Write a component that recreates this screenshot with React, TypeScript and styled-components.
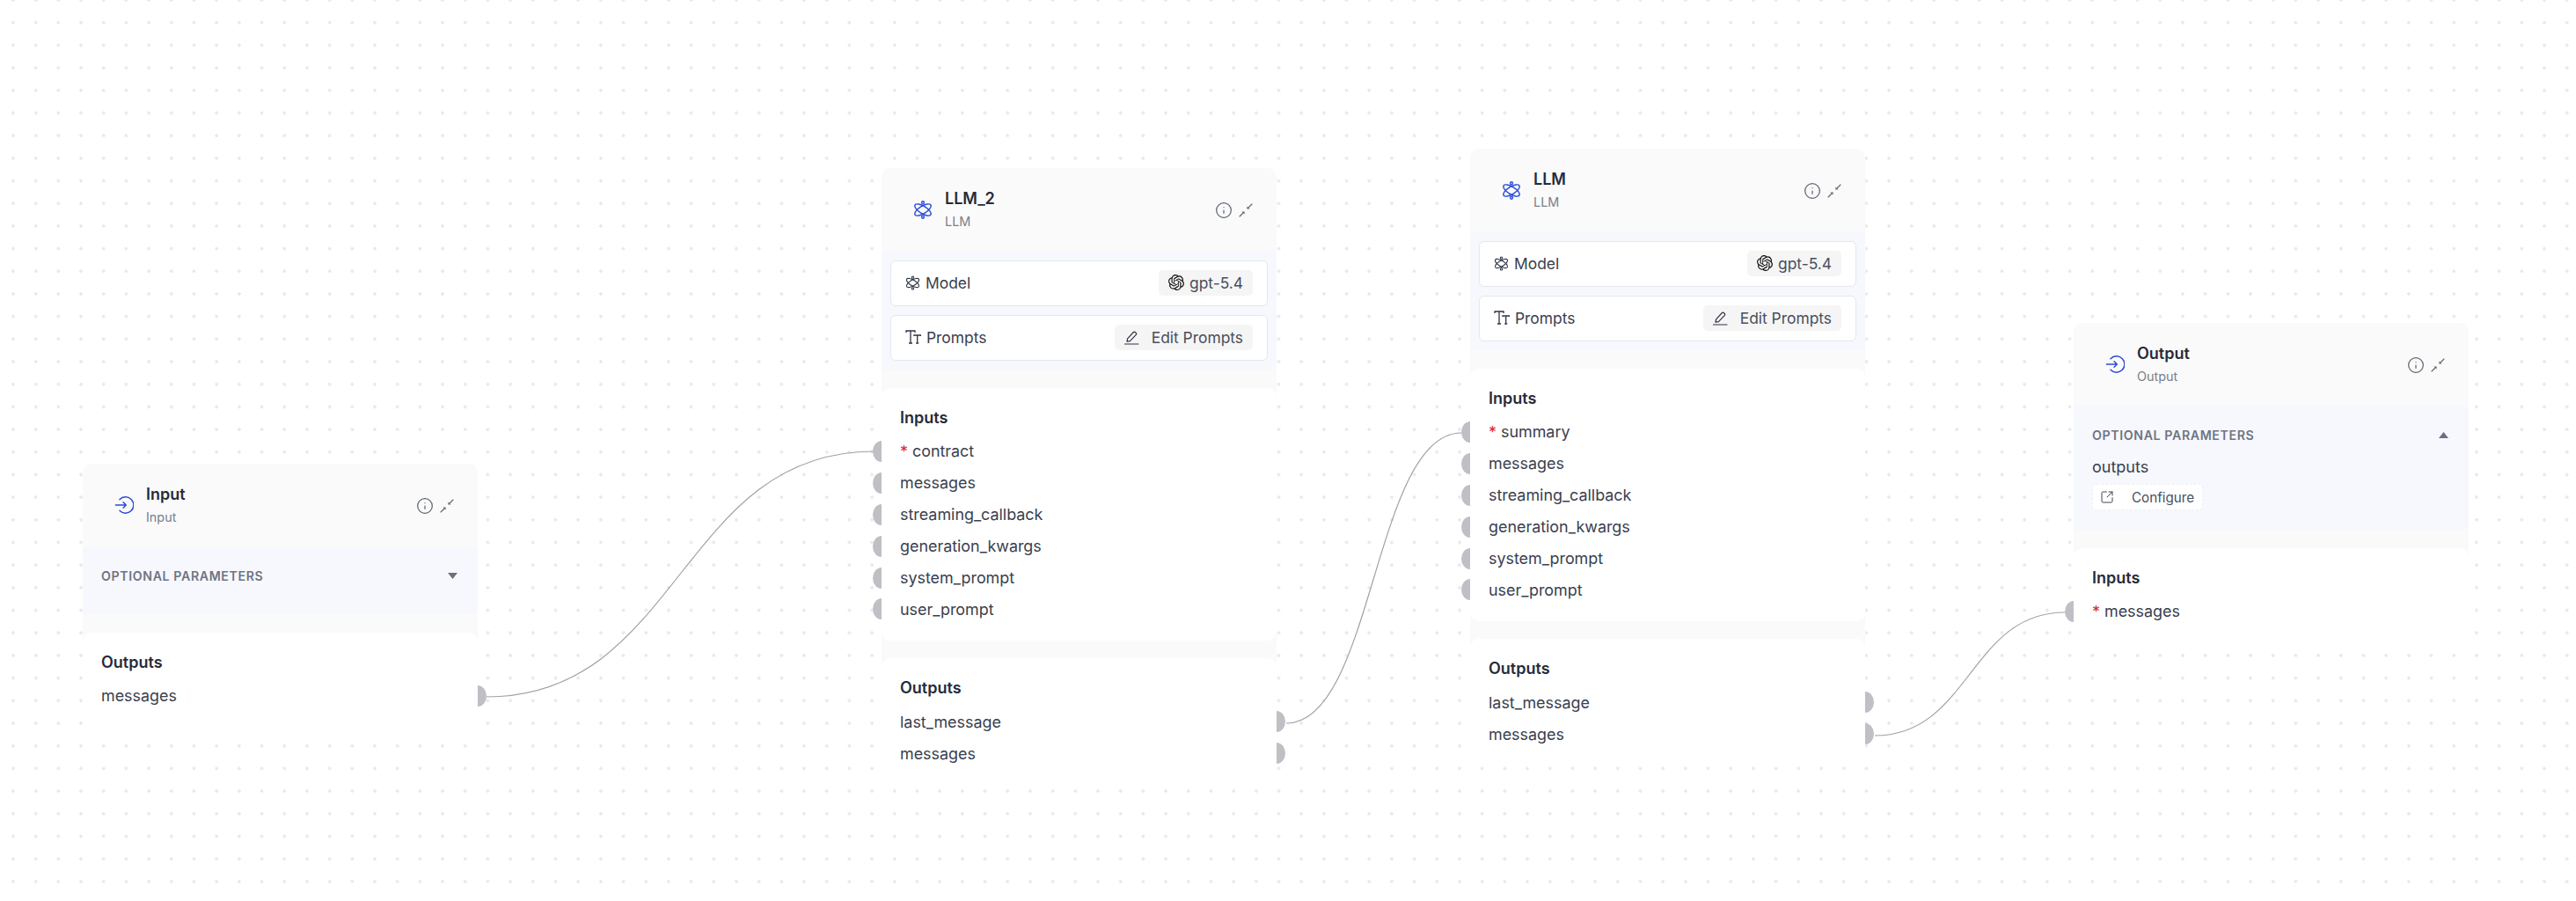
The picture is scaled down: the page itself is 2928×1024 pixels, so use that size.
import React from 'react';
import styled, { createGlobalStyle } from 'styled-components';
import { Info, SquareArrowOutUpRight } from 'lucide-react';
import { SiOpenai } from 'react-icons/si';

const GlobalStyle = createGlobalStyle`
  html, body {
    margin: 0;
    padding: 0;
    background: #fff;
    font-family: Inter, "Liberation Sans", sans-serif;
  }
`;

const Canvas = styled.div`
  position: relative;
  width: 2928px;
  height: 1024px;
  overflow: hidden;
  background-color: #fff;
  background-image: radial-gradient(circle, #e9e9eb 1.5px, transparent 2.1px);
  background-size: 25.7px 25.7px;
  background-position: 2.15px -12.85px;
`;

const Edges = styled.svg`
  position: absolute;
  inset: 0;
  width: 2928px;
  height: 1024px;
  pointer-events: none;
`;

const NodeBox = styled.div<{ $x: number; $y: number }>`
  position: absolute;
  left: ${(p) => p.$x}px;
  top: ${(p) => p.$y}px;
  width: 449px;
  background: #fafafa;
  border-radius: 10px;
`;

const Header = styled.div`
  height: 95px;
  box-sizing: border-box;
  padding: 22px 27px 0 36px;
  display: flex;
  align-items: flex-start;
`;

const HeaderIcon = styled.div`
  width: 22px;
  height: 50px;
  margin-right: 14px;
  display: flex;
  align-items: center;
  justify-content: center;
  flex-shrink: 0;
`;

const TitleBlock = styled.div`
  display: flex;
  flex-direction: column;
  flex: 1;
`;

const Title = styled.div`
  font-size: 18px;
  line-height: 26px;
  font-weight: 600;
  color: #262b3a;
`;

const Subtitle = styled.div`
  font-size: 14.4px;
  line-height: 26px;
  color: #7b7f8b;
`;

const HeaderActions = styled.div`
  height: 52px;
  display: flex;
  align-items: center;
  gap: 7px;
  color: #5f6472;
`;

const ParamSection = styled.div`
  background: #f6f8fd;
  padding: 10px;
  display: flex;
  flex-direction: column;
  gap: 10px;
`;

const ParamCard = styled.div`
  height: 52px;
  box-sizing: border-box;
  background: #fff;
  border: 1px solid #e5e7ef;
  border-radius: 6px;
  padding: 0 16px 2px 16px;
  display: flex;
  align-items: center;
  font-size: 17.4px;
  color: #3a404e;
`;

const ParamLabel = styled.div`
  display: flex;
  align-items: center;
  gap: 6px;
  flex: 1;
`;

const Pill = styled.div<{ $gap: number }>`
  height: 29px;
  padding: 0 11px;
  background: #f5f5f6;
  border-radius: 5px;
  display: flex;
  align-items: center;
  gap: ${(p) => p.$gap}px;
  color: #4a4f5d;
`;

const OptionalSection = styled.div<{ $height: number }>`
  background: #f6f8fd;
  height: ${(p) => p.$height}px;
  box-sizing: border-box;
  padding: 20px 21px 0;
`;

const OptionalHead = styled.div`
  display: flex;
  align-items: center;
  justify-content: space-between;
  height: 24px;
  padding-right: 2px;
  font-size: 14.2px;
  font-weight: 600;
  letter-spacing: 0.6px;
  color: #6f7483;
`;

const OptionalName = styled.div`
  margin-top: 13px;
  font-size: 18px;
  line-height: 24px;
  color: #3a404e;
`;

const ConfigureButton = styled.div`
  margin-top: 7px;
  width: 126px;
  height: 30px;
  box-sizing: border-box;
  background: #fff;
  border: 1px dashed #eceef3;
  border-radius: 5px;
  padding-left: 8px;
  display: flex;
  align-items: center;
  gap: 20px;
  font-size: 15.2px;
  color: #4a4f5d;
`;

const Body = styled.div`
  margin-top: 21px;
  display: flex;
  flex-direction: column;
  gap: 20px;
`;

const PortSection = styled.div`
  background: #fff;
  border-radius: 10px;
  padding: 22px 21px 18px;
`;

const PortHeading = styled.div`
  font-size: 18px;
  line-height: 24px;
  font-weight: 600;
  color: #262b3a;
  margin-bottom: 8px;
`;

const PortRow = styled.div`
  position: relative;
  height: 35.9px;
  display: flex;
  align-items: center;
  gap: 5px;
  font-size: 17.9px;
  color: #3a404e;
`;

const Required = styled.span`
  color: #d9262f;
`;

const Handle = styled.span<{ $side: 'left' | 'right' }>`
  position: absolute;
  top: 6px;
  width: 10px;
  height: 24px;
  background: #bfc0c6;
  ${(p) =>
    p.$side === 'left'
      ? 'left: -31px; border-radius: 100% 0 0 100% / 50% 0 0 50%;'
      : 'right: -31px; border-radius: 0 100% 100% 0 / 0 50% 50% 0;'}
`;

const EntryIcon = () => (
  <svg width="26" height="26" viewBox="0 0 24 24" fill="none" stroke="#2a4bd7" strokeWidth="1.6" strokeLinecap="round" strokeLinejoin="round">
    <path d="M6.5 5.2a10 10 0 1 1 0 13.6" />
    <path d="M1.5 12h13M11 8.5l3.5 3.5-3.5 3.5" />
  </svg>
);

const AtomIcon = ({ size, color, width }: { size: number; color: string; width: number }) => (
  <svg width={size} height={size} viewBox="0 0 24 24" fill="none" stroke={color} strokeWidth={width}>
    <ellipse cx="12" cy="12" rx="11.5" ry="4.6" transform="rotate(32 12 12)" />
    <ellipse cx="12" cy="12" rx="11.5" ry="4.6" transform="rotate(-32 12 12)" />
    <circle cx="12" cy="3" r="1.6" />
    <circle cx="12" cy="21" r="1.6" />
  </svg>
);

const CollapseIcon = () => (
  <svg width="16" height="16" viewBox="0 0 16 16" fill="currentColor" stroke="currentColor" strokeWidth="1.1" strokeLinecap="round">
    <path d="M1 15l4-4M15 1l-4 4" fill="none" />
    <path d="M6.6 9.4v3.2L3.4 9.4zM9.4 6.6V3.4l3.2 3.2z" stroke="none" />
  </svg>
);

const TextSizeIcon = () => (
  <svg width="18" height="18" viewBox="0 0 18 18" fill="none" stroke="#2f3543" strokeWidth="1.3">
    <path d="M1 4V2h10v2M6 2v14M4 16h4" />
    <path d="M10 8V7h7.4v1M13.7 7v9M12.2 16h3" />
  </svg>
);

const PencilIcon = () => (
  <svg width="17" height="17" viewBox="0 0 17 17" fill="none" stroke="#2f3543" strokeWidth="1.2" strokeLinejoin="round" strokeLinecap="round">
    <path d="M0.5 16h15.5" />
    <path d="M3 13.2l.6-3.4 6.8-7.3a1.3 1.3 0 0 1 1.9 0l1 1a1.3 1.3 0 0 1 0 1.9l-6.9 7.2z" />
  </svg>
);

const Chevron = ({ up }: { up?: boolean }) => (
  <svg width="11" height="7" viewBox="0 0 11 7" fill="#6b7080">
    <path d={up ? 'M0 7L5.5 0 11 7z' : 'M0 0L11 0 5.5 7z'} />
  </svg>
);

type Port = { name: string; required?: boolean };

const Ports = ({ title, ports, side }: { title: string; ports: Port[]; side: 'left' | 'right' }) => (
  <PortSection>
    <PortHeading>{title}</PortHeading>
    {ports.map((port) => (
      <PortRow key={port.name}>
        <Handle $side={side} />
        {port.required && <Required>*</Required>}
        <span>{port.name}</span>
      </PortRow>
    ))}
  </PortSection>
);

const NodeHeader = ({ icon, title, subtitle }: { icon: React.ReactNode; title: string; subtitle: string }) => (
  <Header>
    <HeaderIcon>{icon}</HeaderIcon>
    <TitleBlock>
      <Title>{title}</Title>
      <Subtitle>{subtitle}</Subtitle>
    </TitleBlock>
    <HeaderActions>
      <Info size={20} strokeWidth={1.5} />
      <CollapseIcon />
    </HeaderActions>
  </Header>
);

const LlmNode = ({ x, y, title, required }: { x: number; y: number; title: string; required: string }) => (
  <NodeBox $x={x} $y={y}>
    <NodeHeader icon={<AtomIcon size={23} color="#2a4bd7" width={1.5} />} title={title} subtitle="LLM" />
    <ParamSection>
      <ParamCard>
        <ParamLabel>
          <AtomIcon size={17} color="#2f3543" width={1.6} />
          Model
        </ParamLabel>
        <Pill $gap={6}>
          <SiOpenai size={18} color="#111" />
          gpt-5.4
        </Pill>
      </ParamCard>
      <ParamCard>
        <ParamLabel>
          <TextSizeIcon />
          Prompts
        </ParamLabel>
        <Pill $gap={14}>
          <PencilIcon />
          Edit Prompts
        </Pill>
      </ParamCard>
    </ParamSection>
    <Body>
      <Ports
        title="Inputs"
        side="left"
        ports={[
          { name: required, required: true },
          { name: 'messages' },
          { name: 'streaming_callback' },
          { name: 'generation_kwargs' },
          { name: 'system_prompt' },
          { name: 'user_prompt' }
        ]}
      />
      <Ports title="Outputs" side="right" ports={[{ name: 'last_message' }, { name: 'messages' }]} />
    </Body>
  </NodeBox>
);

const edge = (x1: number, y1: number, x2: number, y2: number) => {
  const mid = (x1 + x2) / 2;
  return `M${x1} ${y1}C${mid} ${y1} ${mid} ${y2} ${x2} ${y2}`;
};

const App = () => (
  <Canvas>
    <GlobalStyle />
    <Edges>
      <g fill="none" stroke="#a0a0a6" strokeWidth="1.2">
        <path d={edge(553, 792, 993, 513)} />
        <path d={edge(1462, 822, 1661, 492)} />
        <path d={edge(2131, 836, 2347, 696)} />
      </g>
    </Edges>

    <NodeBox $x={94} $y={527}>
      <NodeHeader icon={<EntryIcon />} title="Input" subtitle="Input" />
      <OptionalSection $height={76}>
        <OptionalHead>
          OPTIONAL PARAMETERS
          <Chevron />
        </OptionalHead>
      </OptionalSection>
      <Body>
        <Ports title="Outputs" side="right" ports={[{ name: 'messages' }]} />
      </Body>
    </NodeBox>

    <LlmNode x={1002} y={191} title="LLM_2" required="contract" />
    <LlmNode x={1671} y={169} title="LLM" required="summary" />

    <NodeBox $x={2357} $y={367}>
      <NodeHeader icon={<EntryIcon />} title="Output" subtitle="Output" />
      <OptionalSection $height={140}>
        <OptionalHead>
          OPTIONAL PARAMETERS
          <Chevron up />
        </OptionalHead>
        <OptionalName>outputs</OptionalName>
        <ConfigureButton>
          <SquareArrowOutUpRight size={16} strokeWidth={1.4} color="#2f3543" />
          Configure
        </ConfigureButton>
      </OptionalSection>
      <Body>
        <Ports title="Inputs" side="left" ports={[{ name: 'messages', required: true }]} />
      </Body>
    </NodeBox>
  </Canvas>
);

export default App;
